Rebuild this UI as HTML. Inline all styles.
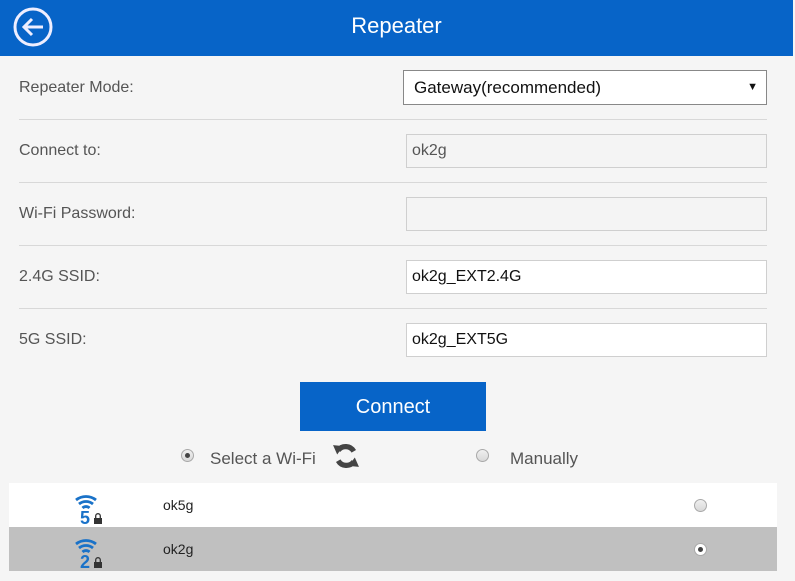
<!DOCTYPE html>
<html><head><meta charset="utf-8"><style>
*{margin:0;padding:0;box-sizing:border-box}
body{width:795px;height:581px;background:#f5f5f5;font-family:"Liberation Sans",Arial,sans-serif;position:relative;overflow:hidden}
.hdr{position:absolute;left:0;top:0;width:793px;height:56px;background:#0764c8;color:#fff;font-size:22px;text-align:center;line-height:52px}
.lbl{position:absolute;left:19px;font-size:16px;color:#555}
.line{position:absolute;left:19px;width:748px;height:1px;background:#d8d8d8}
.inp{position:absolute;left:406px;width:361px;height:34px;border:1px solid #cfcfcf;font-size:16px;padding-left:5px;line-height:32px;color:#111}
.rad{position:absolute;width:13px;height:13px;border-radius:50%;border:1px solid #a9a9a9;background:linear-gradient(#f0f0f0,#d8d8d8)}
.rad.on::after{content:"";position:absolute;left:3px;top:3px;width:5px;height:5px;border-radius:50%;background:#444}
.row{position:absolute;left:9px;width:768px;height:44px;font-size:14px;color:#222}
</style></head><body>
<div class="hdr">Repeater</div>
<svg style="position:absolute;left:12px;top:6px" width="42" height="42" viewBox="0 0 42 42"><circle cx="21" cy="21" r="18" fill="none" stroke="#eef" stroke-width="3"/><path d="M31 21H12M20 13l-8 8 8 8" fill="none" stroke="#eef" stroke-width="3"/></svg>

<div class="lbl" style="top:79px">Repeater Mode:</div>
<div style="position:absolute;left:403px;top:70px;width:364px;height:35px;border:1px solid #888;background:#fff;font-size:17px;line-height:33px;padding-left:10px;color:#111">Gateway(recommended)<span style="position:absolute;right:8px;font-size:11px">▼</span></div>
<div class="line" style="top:119px"></div>
<div class="lbl" style="top:142px">Connect to:</div>
<div class="inp" style="top:134px;background:#f4f4f4;color:#555">ok2g</div>
<div class="line" style="top:182px"></div>
<div class="lbl" style="top:205px">Wi-Fi Password:</div>
<div class="inp" style="top:197px;background:#f4f4f4"></div>
<div class="line" style="top:245px"></div>
<div class="lbl" style="top:268px">2.4G SSID:</div>
<div class="inp" style="top:260px;background:#fff">ok2g_EXT2.4G</div>
<div class="line" style="top:308px"></div>
<div class="lbl" style="top:331px">5G SSID:</div>
<div class="inp" style="top:323px;background:#fff">ok2g_EXT5G</div>

<div style="position:absolute;left:300px;top:382px;width:186px;height:49px;background:#0764c8;color:#fff;font-size:20px;text-align:center;line-height:50px">Connect</div>

<div class="rad on" style="left:181px;top:449px"></div>
<div style="position:absolute;left:210px;top:449px;font-size:17px;color:#555">Select a Wi-Fi</div>
<svg style="position:absolute;left:332px;top:442px" width="28" height="28" viewBox="0 0 27 27"><path d="M21 9A9 9 0 0 0 6 8" fill="none" stroke="#444" stroke-width="5"/><path d="M1 3l10 1-6 8z" fill="#444"/><path d="M6 18a9 9 0 0 0 15 1" fill="none" stroke="#444" stroke-width="5"/><path d="M26 24l-10-1 6-8z" fill="#444"/></svg>
<div class="rad" style="left:476px;top:449px"></div>
<div style="position:absolute;left:510px;top:449px;font-size:17px;color:#555">Manually</div>

<div class="row" style="top:483px;background:#fff">
<svg style="position:absolute;left:64px;top:8px" width="32" height="34" viewBox="0 0 32 34"><path d="M3 9a16 16 0 0 1 20 0M6 13a11 11 0 0 1 14 0M9.5 17a5 5 0 0 1 7 0" fill="none" stroke="#1a72c8" stroke-width="2.8"/><text x="7" y="33" font-family="Liberation Sans" font-weight="bold" font-size="18" fill="#1a72c8">5</text><rect x="21" y="27" width="8" height="6" fill="#333"/><path d="M22.7 27v-2a2.3 2.3 0 0 1 4.6 0v2" fill="none" stroke="#333" stroke-width="1.3"/></svg>
<span style="position:absolute;left:154px;top:14px">ok5g</span>
<div class="rad" style="left:685px;top:16px"></div></div>
<div class="row" style="top:527px;background:#c0c0c0">
<svg style="position:absolute;left:64px;top:8px" width="32" height="34" viewBox="0 0 32 34"><path d="M3 9a16 16 0 0 1 20 0M6 13a11 11 0 0 1 14 0M9.5 17a5 5 0 0 1 7 0" fill="none" stroke="#1a72c8" stroke-width="2.8"/><text x="7" y="33" font-family="Liberation Sans" font-weight="bold" font-size="18" fill="#1a72c8">2</text><rect x="21" y="27" width="8" height="6" fill="#333"/><path d="M22.7 27v-2a2.3 2.3 0 0 1 4.6 0v2" fill="none" stroke="#333" stroke-width="1.3"/></svg>
<span style="position:absolute;left:154px;top:14px">ok2g</span>
<div class="rad on" style="left:685px;top:16px;background:#fff"></div></div>
</body></html>
